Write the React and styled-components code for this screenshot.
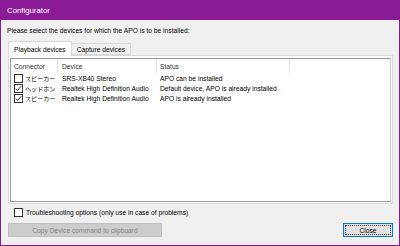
import React from 'react'
import styled, { createGlobalStyle } from 'styled-components'

const GlobalStyle = createGlobalStyle`
  html, body {
    margin: 0;
    padding: 0;
    background: #f0f0f0;
  }
  body {
    font-family: "Liberation Sans", Arial, "Noto Sans CJK JP", sans-serif;
  }
  * { box-sizing: border-box; }
`

const Window = styled.div`
  width: 400px;
  height: 246px;
  display: flex;
  flex-direction: column;
  border: 1px solid #8a1a96;
  border-top: none;
  background: #f0f0f0;
  font-size: 6.7px;
  color: #000;
`

const TitleBar = styled.div`
  height: 20px;
  flex-shrink: 0;
  background: #8a1a96;
  color: #fff;
  display: flex;
  align-items: center;
  padding-left: 6px;
  font-size: 7.8px;
`

const Body = styled.div`
  flex: 1;
  display: flex;
  flex-direction: column;
  padding: 0 6px;
`

const Instruction = styled.div`
  margin-top: 6px;
  height: 10px;
  line-height: 10px;
`

const TabRow = styled.div`
  margin-top: 5px;
  margin-left: 1px;
  height: 14px;
  display: flex;
  align-items: flex-end;
  position: relative;
  z-index: 1;
`

const Tab = styled.div`
  height: ${p => (p.$active ? '15px' : '12px')};
  margin-bottom: ${p => (p.$active ? '-1px' : '0')};
  padding: 0 5px;
  display: flex;
  align-items: center;
  background: ${p => (p.$active ? '#fff' : '#f0f0f0')};
  border: 1px solid #d9d9d9;
  border-bottom: ${p => (p.$active ? 'none' : '1px solid #d9d9d9')};
  border-left: ${p => (p.$active ? '1px solid #d9d9d9' : 'none')};
  color: #000;
`

const Panel = styled.div`
  margin-left: 1px;
  height: 149px;
  background: #fff;
  border: 1px solid #d9d9d9;
  padding: 2px 1px 1px 1px;
  display: flex;
`

const ListView = styled.div`
  flex: 1;
  border: 1px solid #9a9aae;
  border-right-color: #d0d0d0;
  background: #fff;
`

const HeaderRow = styled.div`
  display: flex;
  height: 14px;
  color: #333;
`

const HeaderCell = styled.div`
  width: ${p => p.$w}px;
  padding-left: ${p => p.$pad}px;
  display: flex;
  align-items: center;
  border-right: 1px solid #e5e5e5;
`

const Row = styled.div`
  display: flex;
  height: 10px;
  align-items: center;
`

const Cell = styled.div`
  width: ${p => p.$w}px;
  padding-left: ${p => p.$pad}px;
  display: flex;
  align-items: center;
  white-space: nowrap;
`

const Box = styled.span`
  width: 9px;
  height: 9px;
  border: 1px solid #333;
  background: #fff;
  display: inline-flex;
  align-items: center;
  justify-content: center;
  margin-right: ${p => p.$gap}px;
  flex-shrink: 0;
`

const Jp = styled.span`
  font-family: "Noto Sans CJK JP", sans-serif;
  font-size: 6.1px;
  color: #000;
`

const OptionRow = styled.label`
  margin-top: 3px;
  height: 11px;
  padding-left: 7px;
  display: flex;
  align-items: center;
`

const ButtonRow = styled.div`
  margin-top: 5px;
  height: 14px;
  display: flex;
  justify-content: space-between;
`

const DisabledButton = styled.div`
  margin-left: 1px;
  width: 154px;
  height: 14px;
  background: #cccccc;
  border: 1px solid #bfbfbf;
  color: #838383;
  display: flex;
  align-items: center;
  justify-content: center;
`

const CloseButton = styled.div`
  width: 50px;
  height: 14px;
  background: #e1e1e1;
  border: 1px solid #0078d7;
  padding: 1px;
  display: flex;
`

const FocusRect = styled.div`
  flex: 1;
  border: 1px dotted #444;
  display: flex;
  align-items: center;
  justify-content: center;
`

function Check({ checked, gap = 2 }) {
  return (
    <Box $gap={gap}>
      {checked && (
        <svg width="7" height="7" viewBox="0 0 7 7">
          <path d="M0.8 3.6 L2.6 5.4 L6.2 1.2" stroke="#222" strokeWidth="0.9" fill="none" />
        </svg>
      )}
    </Box>
  )
}

const columns = [
  { w: 47, pad: 3, label: 'Connector' },
  { w: 99, pad: 4, label: 'Device' },
  { w: 133, pad: 3, label: 'Status' },
]

const devices = [
  { checked: false, connector: 'スピーカー', device: 'SRS-XB40 Stereo', status: 'APO can be installed' },
  { checked: true, connector: 'ヘッドホン', device: 'Realtek High Definition Audio', status: 'Default device, APO is already installed' },
  { checked: true, connector: 'スピーカー', device: 'Realtek High Definition Audio', status: 'APO is already installed' },
]

export default function App() {
  return (
    <>
      <GlobalStyle />
      <Window>
        <TitleBar>Configurator</TitleBar>
        <Body>
          <Instruction>Please select the devices for which the APO is to be installed:</Instruction>
          <TabRow>
            <Tab $active>Playback devices</Tab>
            <Tab>Capture devices</Tab>
          </TabRow>
          <Panel>
            <ListView>
              <HeaderRow>
                {columns.map(c => (
                  <HeaderCell key={c.label} $w={c.w} $pad={c.pad}>{c.label}</HeaderCell>
                ))}
              </HeaderRow>
              {devices.map((d, i) => (
                <Row key={i}>
                  <Cell $w={47} $pad={3}>
                    <Check checked={d.checked} />
                    <Jp>{d.connector}</Jp>
                  </Cell>
                  <Cell $w={99} $pad={4}>{d.device}</Cell>
                  <Cell $w={133} $pad={3}>{d.status}</Cell>
                </Row>
              ))}
            </ListView>
          </Panel>
          <OptionRow>
            <Check checked={false} gap={3} />
            Troubleshooting options (only use in case of problems)
          </OptionRow>
          <ButtonRow>
            <DisabledButton>Copy Device command to clipboard</DisabledButton>
            <CloseButton>
              <FocusRect>Close</FocusRect>
            </CloseButton>
          </ButtonRow>
        </Body>
      </Window>
    </>
  )
}
